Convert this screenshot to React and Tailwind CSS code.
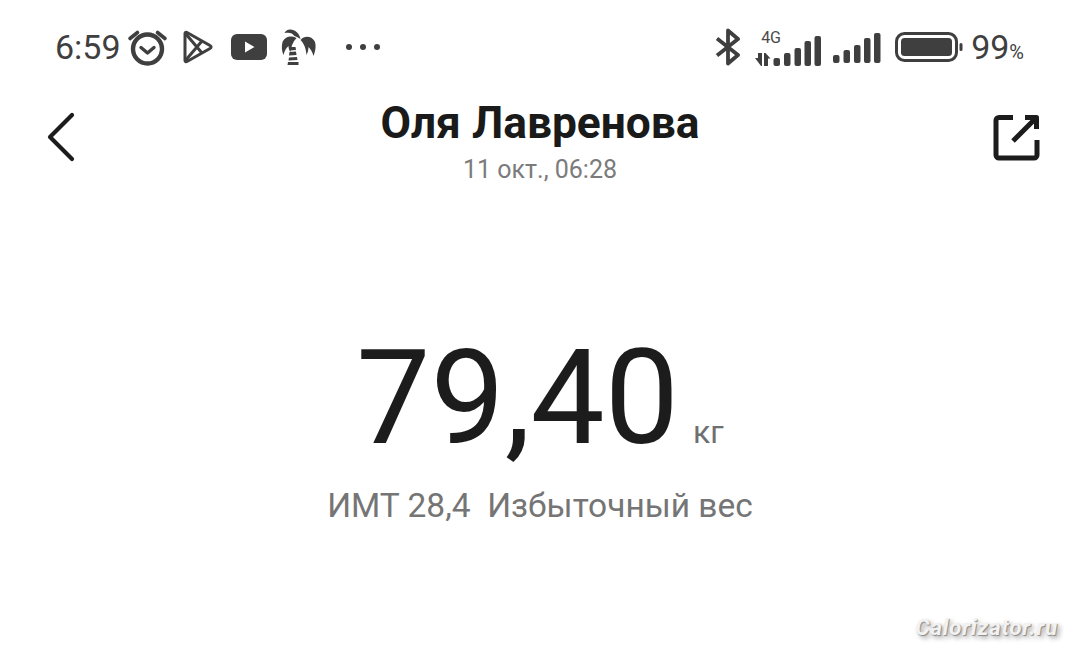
const font = { fontFamily: 'Roboto, sans-serif' };

function AlarmIcon() {
  return (
    <svg width="42" height="38" viewBox="0 0 42 38" fill="none" stroke="#3f3f3f" strokeLinecap="round">
      <circle cx="20.500" cy="21" r="14.500" strokeWidth="4.400" />
      <path d="M14 19.500 20.500 25 27 19.500" strokeWidth="3.400" strokeLinejoin="round" />
      <path d="M3 10.500 10.500 4.500M38 10.500 30.500 4.500" strokeWidth="3.600" />
    </svg>
  );
}

function PlayIcon() {
  return (
    <svg width="32" height="34" viewBox="0 0 32 34" fill="none" stroke="#3f3f3f" strokeWidth="3" strokeLinejoin="round">
      <path d="M3 3.500c0-1 1-1.500 2-1L28 15.500c1.500.8 1.500 2.200 0 3L5 31.500c-1 .5-2 0-2-1z" />
      <path d="M3 3 20 23M3 31 20 11" />
    </svg>
  );
}

function YoutubeIcon() {
  return (
    <svg width="36" height="26" viewBox="0 0 36 26">
      <rect width="36" height="26" rx="6" fill="#3f3f3f" />
      <path d="M14 7.500v11l9.500-5.500z" fill="#fff" />
    </svg>
  );
}

function PalmIcon() {
  return (
    <svg width="37" height="36" viewBox="0 0 37 36" fill="#3f3f3f">
      <g transform="translate(1.500 0)">
        <path d="M19 10C18 4 13 0 8 .5 5 1 3.500 2.500 3 4c5-1 8 0 10 3 2 .5 4 1.500 6 3z" />
        <path d="M15 9C9 6 3 8 1 13c-1 4-1 9 1 13 1-4 2.500-7 5-9 0 3 1 5 2 6 .5-5 2-10 6-14z" />
        <path d="M19 11c4-5 11-4 14 1 2 4 1 10-1 15-1-4-3-7-5-9 0 3-1 6-2 8-.5-6-2-11-6-15z" />
        <path d="M8.500 18H14l.5 3-6 .5zM8 23l6.500-.5.5 3.500-7.500.5zM7.500 28.500l8-.5.5 3-9 .5zM6.500 33H17v3H6z" />
      </g>
    </svg>
  );
}

function BluetoothIcon() {
  return (
    <svg width="28" height="38" viewBox="0 0 28 38" fill="none" stroke="#3f3f3f" strokeWidth="3.800" strokeLinejoin="round">
      <path d="M3 10.500 24 27 14 35.500V2.500L24 11 3 27.500" />
    </svg>
  );
}

function Bars({ x = 0 }) {
  const bars = [
    [0, 22],
    [10.500, 17],
    [21, 12],
    [31, 5],
    [41, 0],
  ];
  return bars.map(([left, top]) => (
    <rect key={left} x={x + left} y={top} width="6.500" height={30 - top} rx="2" fill="#3f3f3f" />
  ));
}

function SignalOne() {
  return (
    <div className="relative mt-[1px] h-[36px] w-[68px]">
      <span className="absolute left-[7px] top-0 text-[16px] leading-[16px] text-[#4a4a4a]">4G</span>
      <svg className="absolute bottom-0 left-0" width="68" height="30" viewBox="0 0 68 30" fill="#3f3f3f">
        <path d="M1 22h3v-5h4v13H7zM10 17h1.500l5 5.500H14V30h-4z" />
        <Bars x={19.500} />
      </svg>
    </div>
  );
}

function SignalTwo() {
  return (
    <svg className="mt-[2px]" width="48" height="30" viewBox="0 0 48 30">
      <Bars />
    </svg>
  );
}

function BatteryIcon() {
  return (
    <svg width="68" height="30" viewBox="0 0 68 30">
      <rect x="1.500" y="1.500" width="60" height="27" rx="8" fill="none" stroke="#3f3f3f" strokeWidth="3" />
      <rect x="6" y="6" width="51" height="18" rx="3.500" fill="#3f3f3f" />
      <rect x="64.500" y="11" width="3" height="8" rx="1.500" fill="#3f3f3f" />
    </svg>
  );
}

function StatusBar() {
  return (
    <div className="flex h-[94px] items-center justify-between pl-[55px] pr-[56px] text-[#3f3f3f]">
      <div className="flex items-center">
        <span className="text-[34px] leading-none">6:59</span>
        <div className="ml-[6px]"><AlarmIcon /></div>
        <div className="ml-[13px]"><PlayIcon /></div>
        <div className="ml-[17px]"><YoutubeIcon /></div>
        <div className="ml-[13px]"><PalmIcon /></div>
        <div className="ml-[29px] flex gap-[8px]">
          <span className="size-[6px] rounded-full bg-[#3f3f3f]" />
          <span className="size-[6px] rounded-full bg-[#3f3f3f]" />
          <span className="size-[6px] rounded-full bg-[#3f3f3f]" />
        </div>
      </div>
      <div className="flex items-center">
        <BluetoothIcon />
        <div className="ml-[12px]"><SignalOne /></div>
        <div className="ml-[11px]"><SignalTwo /></div>
        <div className="ml-[14px]"><BatteryIcon /></div>
        <span className="ml-[8px] text-[34px] leading-none">99<span className="text-[20px]">%</span></span>
      </div>
    </div>
  );
}

function Header() {
  return (
    <div className="grid grid-cols-[1fr_auto_1fr] items-start px-[40px]">
      <svg className="ml-[6px] mt-[18px]" width="30" height="50" viewBox="0 0 30 50" fill="none" stroke="#1c1c1c" strokeWidth="4.200" strokeLinecap="round" strokeLinejoin="round">
        <path d="M26 3 4 25l22 22" />
      </svg>
      <div className="flex flex-col items-center">
        <h1 className="text-[44.300px] font-bold leading-[58px] text-[#1a1a1a]">Оля Лавренова</h1>
        <p className="mt-[2px] text-[25px] leading-[32px] text-[#7b7b7b]">11 окт., 06:28</p>
      </div>
      <svg className="mt-[18px] justify-self-end" width="50" height="50" viewBox="0 0 50 50" fill="none" stroke="#1c1c1c" strokeWidth="5" strokeLinejoin="round">
        <path d="M23 5.500H9a3 3 0 0 0-3 3v34.500a3 3 0 0 0 3 3h35a3 3 0 0 0 3-3V28" />
        <path d="M35 5.500h11.500V17M46.500 5.500 23 29" />
      </svg>
    </div>
  );
}

export default function App() {
  return (
    <div className="relative h-[649px] w-[1080px] overflow-hidden bg-white" style={font}>
      <StatusBar />
      <Header />
      <div className="mt-[132px] flex flex-col items-center">
        <div className="flex items-baseline">
          <span className="text-[132px] font-normal leading-[160px] text-[#1c1c1c]">79,40</span>
          <span className="ml-[14px] text-[32px] leading-none text-[#6f6f6f]">кг</span>
        </div>
        <p className="mt-[8px] text-[33.500px] leading-[40px] text-[#757575]">ИМТ 28,4&nbsp;&nbsp;Избыточный вес</p>
      </div>
      <span className="absolute right-[22px] top-[615px] text-[22px] font-bold italic leading-[26px] tracking-[0.9px] text-[#f2f2f2] [text-shadow:1px_1px_1px_#8a8a8a,3px_3px_5px_#a0a0a0]">
        Calorizator.ru
      </span>
    </div>
  );
}
